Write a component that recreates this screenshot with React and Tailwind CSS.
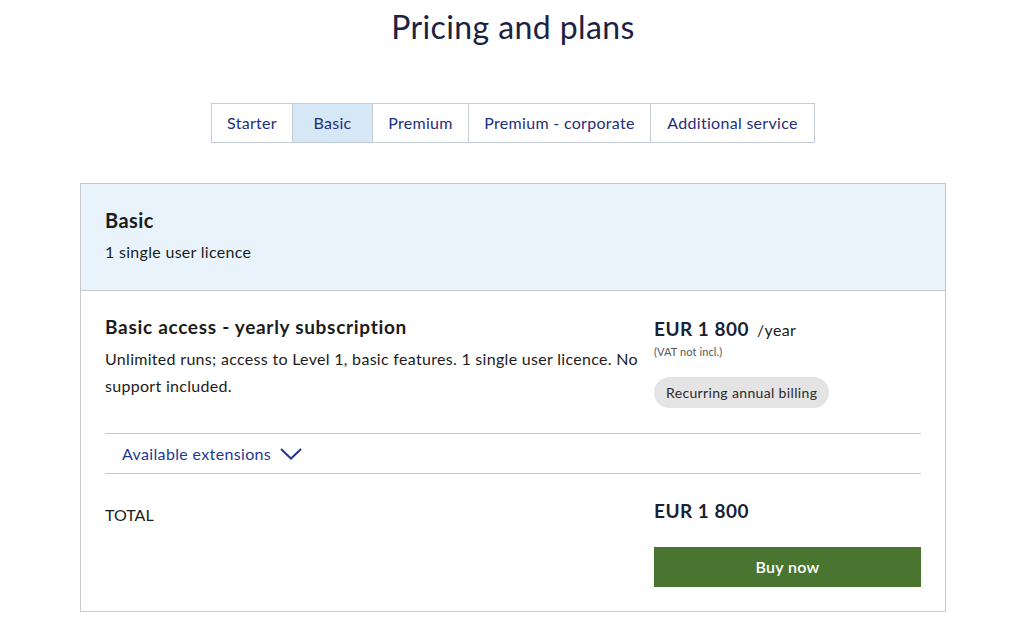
import React from "react";

const tabs = ["Starter", "Basic", "Premium", "Premium - corporate", "Additional service"];
const tabWidths = ["w-[80px]", "w-[80px]", "w-[96px]", "w-[182px]", "w-[164px]"];

export default function App() {
  return (
    <div className="w-[1026px] h-[638px] bg-white text-[#1c1c1c] font-['Lato','Noto_Sans',sans-serif] tracking-[0.3px]">
      <h1 className="pt-[7px] text-center text-[32px] leading-[40px] text-[#1b2242] font-normal tracking-[0.4px]">
        Pricing and plans
      </h1>

      <div className="mt-[56px] flex justify-center">
        <div className="flex border border-[#c4ccd6]">
          {tabs.map((t, i) => (
            <div
              key={t}
              className={`${tabWidths[i]} h-[38px] flex items-center justify-center text-[16px] text-[#1f2d7b] ${i > 0 ? "border-l border-[#c4ccd6]" : ""} ${i === 1 ? "bg-[#d6e8f5]" : "bg-white"}`}
            >
              {t}
            </div>
          ))}
        </div>
      </div>

      <div className="mx-auto mt-[40px] w-[866px] border border-[#c8c8c8]">
        <div className="bg-[#e8f3fb] border-b border-[#c8c8c8] px-[24px] pt-[22px] pb-[26px]">
          <div className="text-[20px] leading-[28px] font-bold text-[#1c1c1c] tracking-[0.4px]">Basic</div>
          <div className="mt-[6px] text-[16px] leading-[24px]">1 single user licence</div>
        </div>

        <div className="px-[24px] pb-[24px]">
          <div className="flex gap-[14px] pt-[23px] pb-[25px] border-b border-[#c8c8c8]">
            <div className="flex-1">
              <div className="text-[19px] leading-[26px] font-bold tracking-[0.7px]">Basic access - yearly subscription</div>
              <div className="mt-[5px] text-[16px] leading-[27px]">
                Unlimited runs; access to Level 1, basic features. 1 single user licence. No support included.
              </div>
            </div>
            <div className="w-[267px] mt-[2px]">
              <div className="flex items-baseline text-[#1a1f36]">
                <span className="text-[19px] leading-[26px] font-bold tracking-[0.5px]">EUR 1 800</span>
                <span className="ml-[8px] text-[16px] text-[#1c1c1c]">/year</span>
              </div>
              <div className="mt-[3px] text-[11px] leading-[14px] text-[#555] tracking-[0.1px]">(VAT not incl.)</div>
              <div className="mt-[18px] inline-flex h-[31px] items-center rounded-full bg-[#e4e4e4] px-[12px] text-[14px] text-[#2a2a2a] tracking-[0.35px]">
                Recurring annual billing
              </div>
            </div>
          </div>

          <div className="h-[40px] flex items-center pl-[17px] border-b border-[#c8c8c8] text-[16px] text-[#1f3a93] tracking-[0.35px]">
            Available extensions
            <svg className="ml-[9px]" width="22" height="12" viewBox="0 0 22 12" fill="none">
              <path d="M1 1 L11 10.5 L21 1" stroke="#1f3a93" strokeWidth="2" />
            </svg>
          </div>

          <div className="flex gap-[14px] pt-[24px]">
            <div className="flex-1 mt-[5px] text-[16px] leading-[24px] tracking-[0px]">TOTAL</div>
            <div className="w-[267px]">
              <div className="text-[19px] leading-[26px] font-bold text-[#1a1f36] tracking-[0.5px]">EUR 1 800</div>
              <button className="mt-[23px] w-full h-[40px] bg-[#4a7530] text-white text-[16px] font-semibold">
                Buy now
              </button>
            </div>
          </div>
        </div>
      </div>
    </div>
  );
}
